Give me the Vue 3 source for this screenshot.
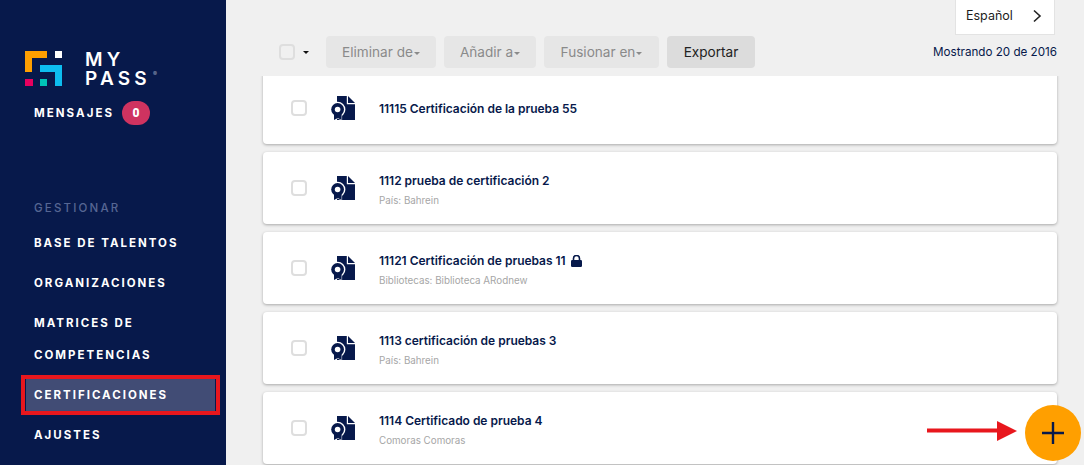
<script setup>
const menu = [
  { label: 'BASE DE TALENTOS' },
  { label: 'ORGANIZACIONES' },
  { label: 'MATRICES DE COMPETENCIAS', multi: true },
  { label: 'CERTIFICACIONES', active: true },
  { label: 'AJUSTES' }
]
const buttons = [
  { label: 'Eliminar de', w: 110 },
  { label: 'Añadir a', w: 92 },
  { label: 'Fusionar en', w: 115 }
]
const cards = [
  { title: '11115 Certificación de la prueba 55', sub: '' },
  { title: '1112 prueba de certificación 2', sub: 'País: Bahrein' },
  { title: '11121 Certificación de pruebas 11', sub: 'Bibliotecas: Biblioteca ARodnew', lock: true },
  { title: '1113 certificación de pruebas 3', sub: 'País: Bahrein' },
  { title: '1114 Certificado de prueba 4', sub: 'Comoras Comoras' }
]
</script>

<template>
  <div class="page">
    <aside class="side">
      <div class="brand">
        <svg class="logo" width="37" height="35" viewBox="0 0 37 35">
          <path d="M0 0H22V7H7V21H0Z" fill="#ff9f00" />
          <rect x="30" y="0" width="7" height="7" fill="#fff" />
          <path d="M15 14H37V35H30V21H15Z" fill="#0dbdf0" />
          <rect x="0" y="28" width="8" height="7" fill="#e6005f" />
          <rect x="15" y="28" width="7" height="7" fill="#00c4b8" />
        </svg>
        <div class="word">MY<br />PASS<sup class="reg">®</sup></div>
      </div>
      <div class="msg"><span>MENSAJES</span><b class="badge">0</b></div>
      <div class="group">GESTIONAR</div>
      <nav class="nav">
        <a v-for="m in menu" :key="m.label" class="item" :class="{ active: m.active, multi: m.multi }">
          {{ m.label }}
          <i v-if="m.active" class="mark"></i>
        </a>
      </nav>
    </aside>

    <main class="main">
      <div class="top">
        <div class="lang"><span>Español</span>
          <svg width="10" height="14" viewBox="0 0 10 14"><path d="M2 1.5L8 7L2 12.5" fill="none" stroke="#222" stroke-width="1.6" /></svg>
        </div>
      </div>
      <div class="bar">
        <span class="check head"></span>
        <span class="caret dark"></span>
        <button v-for="b in buttons" :key="b.label" class="btn" :style="{ width: b.w + 'px' }">{{ b.label }}<span class="caret"></span></button>
        <button class="btn export">Exportar</button>
        <span class="count">Mostrando 20 de 2016</span>
      </div>
      <div class="list">
        <article v-for="c in cards" :key="c.title" class="card">
          <span class="check"></span>
          <svg class="doc" width="24" height="24" viewBox="0 0 24 24">
            <path d="M6 0H15.8V8.2H24V24H6Z" fill="#07194b" />
            <path d="M17 0L24 7H17Z" fill="#07194b" />
            <circle cx="6.6" cy="13.5" r="7.8" fill="#fff" />
            <path d="M3 16V24L6.8 22L10.6 24V16Z" fill="#fff" stroke="#fff" stroke-width="1" />
            <path d="M3 16V24L6.8 22L10.6 24V16Z" fill="#07194b" />
            <circle cx="6.6" cy="13.5" r="6.4" fill="#07194b" />
            <circle cx="6.6" cy="13.5" r="2.8" fill="#fff" />
          </svg>
          <div class="text" :class="{ two: c.sub }">
            <div class="title">{{ c.title }}
              <svg v-if="c.lock" class="lock" width="11" height="12" viewBox="0 0 11 12"><path d="M2.5 5V3.5a3 3 0 0 1 6 0V5" fill="none" stroke="#07194b" stroke-width="1.6" /><rect x="0" y="5" width="11" height="7" rx="1.2" fill="#07194b" /></svg>
            </div>
            <div v-if="c.sub" class="sub">{{ c.sub }}</div>
          </div>
        </article>
      </div>
    </main>

    <svg class="arrow" width="92" height="22" viewBox="0 0 92 22"><rect x="0" y="8.5" width="72" height="4" fill="#e8171d" /><path d="M70 1L90 11L70 21Z" fill="#e8171d" /></svg>
    <div class="fab">
      <svg width="22" height="22" viewBox="0 0 22 22"><path d="M11 0V22M0 11H22" stroke="#07194b" stroke-width="2.4" /></svg>
    </div>
  </div>
</template>

<style scoped>
.page {
  position: relative;
  display: flex;
  width: 1084px;
  height: 465px;
  overflow: hidden;
  background: #f0f0f0;
  font-family: Inter, "Noto Sans", sans-serif;
  color: #07194b;
}
.side {
  flex: none;
  width: 226px;
  box-sizing: border-box;
  padding: 51px 0 0;
  background: #07194b;
  color: #fff;
}
.brand { display: flex; padding-left: 25px; }
.logo { flex: none; }
.word {
  margin: -1px 0 0 23px;
  font-size: 19px;
  font-weight: 600;
  line-height: 19px;
  letter-spacing: 4.2px;
  height: 34px;
}
.reg { margin-left: 2px; font-size: 6px; vertical-align: 9px; line-height: 0; letter-spacing: 0; color: #8f99b5; }
.msg {
  display: flex;
  align-items: center;
  gap: 8px;
  height: 24px;
  margin-top: 15px;
  padding-left: 34px;
  font-size: 11.5px;
  font-weight: 700;
  letter-spacing: 2.05px;
}
.badge {
  display: flex;
  align-items: center;
  justify-content: center;
  width: 28px;
  height: 24px;
  border-radius: 12px;
  background: #cf3360;
  font-family: Roboto, sans-serif;
  font-size: 12px;
  letter-spacing: 0;
}
.group {
  margin-top: 73px;
  padding-left: 34px;
  font-size: 11.5px;
  font-weight: 500;
  line-height: 20px;
  letter-spacing: 2.2px;
  color: #566693;
}
.nav { display: flex; flex-direction: column; margin-top: 5px; }
.item {
  position: relative;
  box-sizing: border-box;
  width: 189px;
  margin-left: 26px;
  padding: 4px 8px;
  height: 40px;
  line-height: 32px;
  font-size: 11.5px;
  font-weight: 700;
  letter-spacing: 2px;
}
.item.multi { height: 72px; }
.item.active { background: #414c75; height: 32px; padding: 0 8px; margin-top: 4px; margin-bottom: 4px; }
.mark {
  position: absolute;
  left: -5px;
  right: -5px;
  top: -4px;
  bottom: -4px;
  border: 4px solid #e8171d;
}
.main { flex: 1; min-width: 0; display: flex; flex-direction: column; }
.top { height: 36px; }
.lang {
  display: flex;
  align-items: center;
  justify-content: space-between;
  box-sizing: border-box;
  width: 100px;
  height: 35px;
  margin-left: 729px;
  padding: 0 12px 3px 10px;
  background: #fff;
  border: 1px solid #e3e3e3;
  border-top: 0;
  font-size: 12.5px;
  color: #1d1d1d;
}
.bar {
  display: flex;
  align-items: center;
  gap: 8px;
  height: 32px;
  padding: 0 27px 0 53px;
  flex: none;
}
.check {
  flex: none;
  box-sizing: border-box;
  width: 16px;
  height: 16px;
  border: 2px solid #dedede;
  border-radius: 4px;
  background: #fff;
}
.check.head { background: transparent; }
.caret {
  display: inline-block;
  margin-left: 1px;
  vertical-align: 2px;
  border-left: 3.5px solid transparent;
  border-right: 3.5px solid transparent;
  border-top: 3.5px solid #8a8a8a;
}
.caret.dark { border-top-color: #111; margin: 0 9px 0 0; }
.btn {
  box-sizing: border-box;
  flex: none;
  height: 32px;
  padding: 0;
  border: 0;
  border-radius: 4px;
  background: #e6e6e6;
  color: #8a8a8a;
  font: 400 13.6px Inter, "Noto Sans", sans-serif;
}
.export { width: 88px; background: #dcdcdc; color: #222; }
.count { margin-left: auto; font-size: 11.65px; white-space: nowrap; }
.list {
  flex: 1;
  min-height: 0;
  margin-top: 8px;
  padding: 0 27px 0 37px;
  overflow: hidden;
}
.card {
  display: flex;
  align-items: center;
  box-sizing: border-box;
  height: 72px;
  margin-bottom: 8px;
  padding-left: 28px;
  background: #fff;
  border-radius: 4px;
  box-shadow: 0 1px 3px rgba(0, 0, 0, 0.3);
}
.card:first-child { margin-top: -4px; }
.doc { flex: none; margin-left: 24px; }
.text { margin-left: 24px; padding-top: 2px; }
.text.two { padding-top: 4px; }
.title { display: flex; align-items: center; gap: 5px; font-size: 12px; font-weight: 600; line-height: 16px; letter-spacing: -0.02px; }
.lock { flex: none; }
.sub { margin-top: 6px; font-size: 9.8px; line-height: 12px; color: #a6a6a6; }
.arrow { position: absolute; left: 927px; top: 420px; }
.fab {
  position: absolute;
  left: 1025px;
  top: 405px;
  display: flex;
  align-items: center;
  justify-content: center;
  width: 56px;
  height: 56px;
  border-radius: 50%;
  background: #ff9f00;
}
</style>
